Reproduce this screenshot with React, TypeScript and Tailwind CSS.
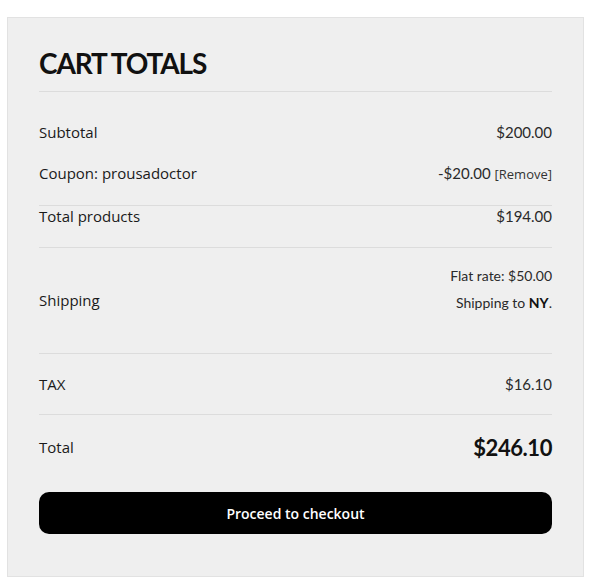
import React from "react";

const label = "text-[15px] text-[#1a1a1a] [font-family:'Open_Sans',sans-serif]";
const value = "text-[15px] text-[#2a2a2a] [font-family:Lato,sans-serif]";

const App = () => {
  return (
    <div className="min-h-[585px] bg-white pt-[17px] pl-[7px]">
      <div className="w-[577px] border border-[#e2e2e2] bg-[#efefef] px-[31px] pb-[42px]">
        {/* Header */}
        <div className="border-b border-[#dcdcdc] pt-[28px] pb-[11px]">
          <h2 className="text-[28px] leading-[34px] font-bold tracking-[-0.04em] text-[#111] [font-family:Lato,sans-serif]">
            CART TOTALS
          </h2>
        </div>

        {/* Subtotal + coupon */}
        <div className="border-b border-[#dcdcdc] pt-[20px] pb-[11px]">
          <div className="flex h-[41px] items-center justify-between">
            <span className={label}>Subtotal</span>
            <span className={value}>$200.00</span>
          </div>
          <div className="flex h-[41px] items-center justify-between">
            <span className={label}>Coupon: prousadoctor</span>
            <span className={value}>
              -$20.00{" "}
              <span className="text-[13px] text-[#333] [font-family:'Open_Sans',sans-serif]">[Remove]</span>
            </span>
          </div>
        </div>

        {/* Total products */}
        <div className="border-b border-[#dcdcdc] pb-[20px]">
          <div className="flex h-[21px] items-center justify-between">
            <span className={label}>Total products</span>
            <span className={value}>$194.00</span>
          </div>
        </div>

        {/* Shipping */}
        <div className="flex h-[106px] items-center justify-between border-b border-[#dcdcdc]">
          <span className={label}>Shipping</span>
          <div className="self-start mt-[14px] text-right text-[14px] leading-[27px] text-[#2a2a2a] [font-family:Lato,sans-serif]">
            <div>Flat rate: $50.00</div>
            <div>
              Shipping to <strong className="font-bold text-[#111]">NY</strong>.
            </div>
          </div>
        </div>

        {/* Tax */}
        <div className="flex h-[61px] items-center justify-between border-b border-[#dcdcdc]">
          <span className={label}>TAX</span>
          <span className={value}>$16.10</span>
        </div>

        {/* Total */}
        <div className="flex h-[64px] items-center justify-between">
          <span className={label}>Total</span>
          <span className="text-[22px] font-bold tracking-[-0.02em] text-[#111] [font-family:Lato,sans-serif]">
            $246.10
          </span>
        </div>

        <button className="mt-[13px] flex h-[42px] w-full items-center justify-center rounded-[10px] bg-black text-[14px] font-semibold text-white [font-family:'Open_Sans',sans-serif]">
          Proceed to checkout
        </button>
      </div>
    </div>
  );
};

export default App;
